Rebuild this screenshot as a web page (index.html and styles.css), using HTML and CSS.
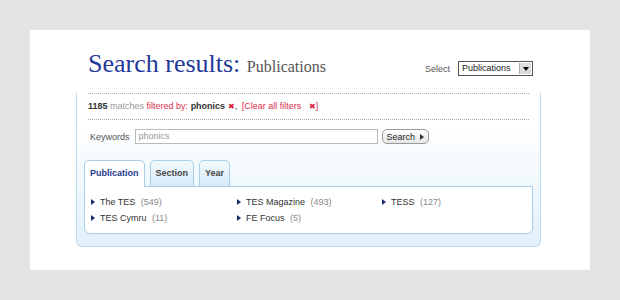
FILE: index.html
```html
<!DOCTYPE html>
<html lang="en">

<head>
    <meta charset="UTF-8">
    <title>Search results: Publications</title>
    <link rel="stylesheet" href="styles.css">
</head>

<body>
    <div class="page">
        <div class="header">
            <h1>Search results: <span class="sub">Publications</span></h1>
            <div class="picker">
                <label>Select</label>
                <div class="select">Publications<span class="arrow"></span></div>
            </div>
        </div>

        <div class="results">
            <div class="filters">
                <b>1185</b> <span class="muted">matches</span>
                <span class="red">filtered by:</span> <b>phonics</b> <span class="x">&#x2716;</span>,
                <span class="clear">[Clear all filters <span class="x">&#x2716;</span>]</span>
            </div>
            <div class="search">
                <label>Keywords</label>
                <div class="input">phonics</div>
                <button>Search <span class="tri"></span></button>
            </div>

            <div class="tabs">
                <div class="tab active">Publication</div>
                <div class="tab">Section</div>
                <div class="tab">Year</div>
            </div>
            <div class="panel">
                <div class="item"><span class="tri"></span>The TES <span class="count">(549)</span></div>
                <div class="item"><span class="tri"></span>TES Magazine <span class="count">(493)</span></div>
                <div class="item"><span class="tri"></span>TESS <span class="count">(127)</span></div>
                <div class="item"><span class="tri"></span>TES Cymru <span class="count">(11)</span></div>
                <div class="item"><span class="tri"></span>FE Focus <span class="count">(5)</span></div>
            </div>
        </div>
    </div>
</body>

</html>
```

FILE: styles.css
```css
body {
    margin: 0;
    background: #e3e3e3;
    font-family: "Liberation Sans", Arial, sans-serif;
    font-size: 9px;
    color: #333;
}

.page {
    width: 560px;
    height: 240px;
    margin: 30px;
    background: #fff;
    box-sizing: border-box;
    padding: 14px 0 0 46px;
}

.header {
    display: flex;
    align-items: flex-end;
    width: 445px;
    height: 45px;
    padding-left: 12px;
}

h1 {
    flex: 1;
    margin: 0 0 9px;
    font-family: "Liberation Serif", "Times New Roman", serif;
    font-weight: normal;
    font-size: 26px;
    line-height: 26px;
    color: #22399a;
}

h1 .sub {
    font-size: 16px;
    color: #555;
}

.picker {
    display: flex;
    align-items: center;
    gap: 8px;
    margin-bottom: 13px;
    color: #555;
}

.select {
    position: relative;
    width: 70px;
    height: 13px;
    line-height: 13px;
    padding-left: 3px;
    border: 1px solid #555;
    background: #fff;
    color: #222;
}

.select .arrow {
    position: absolute;
    right: 1px;
    top: 1px;
    width: 11px;
    height: 11px;
    background: #ddd;
    border-left: 1px solid #aaa;
}

.select .arrow::after {
    content: "";
    position: absolute;
    left: 3px;
    top: 4px;
    border: 3px solid transparent;
    border-top: 4px solid #000;
}

.results {
    width: 465px;
    height: 154px;
    margin-top: 4px;
    box-sizing: border-box;
    padding: 0 7px;
    border: 1px solid #bcdcf0;
    border-top: none;
    border-radius: 0 0 6px 6px;
    background: linear-gradient(#fff 0%, #fff 20%, #e1f0fa 100%);
}

.filters {
    margin: 0 4px;
    padding: 5px 0;
    height: 15px;
    line-height: 15px;
    border-top: 1px dotted #aaa;
    border-bottom: 1px dotted #aaa;
    color: #333;
}

.filters .muted {
    color: #999;
}

.red,
.clear {
    color: #d8314b;
}

.x {
    color: #d8203b;
    font-size: 8px;
}

.clear {
    margin-left: 2px;
}

.clear .x {
    margin-left: 5px;
}

.search {
    display: flex;
    align-items: center;
    gap: 5px;
    padding: 9px 6px 0;
    color: #555;
}

.input {
    width: 238px;
    height: 13px;
    line-height: 13px;
    padding-left: 3px;
    border: 1px solid #bbb;
    color: #999;
    background: #fff;
}

button {
    font: inherit;
    color: #222;
    height: 15px;
    padding: 0 4px;
    margin-left: -1px;
    border: 1px solid #999;
    border-radius: 5px;
    background: linear-gradient(#fff, #e6e6e6);
    display: flex;
    align-items: center;
    gap: 5px;
}

.tri {
    display: inline-block;
    border: 3px solid transparent;
    border-left: 4px solid #1d2a6e;
    border-right: none;
}

button .tri {
    border-left-color: #333;
}

.tabs {
    display: flex;
    gap: 5px;
    margin-top: 15px;
    height: 27px;
    align-items: flex-end;
}

.tab {
    height: 25px;
    line-height: 25px;
    padding: 0 5px;
    border: 1px solid #a9d0ea;
    border-bottom: none;
    border-radius: 5px 5px 0 0;
    background: linear-gradient(#f3f9fd, #d6eaf8);
    font-weight: bold;
    color: #444;
}

.tab.active {
    height: 26px;
    background: #fff;
    color: #243b8f;
    margin-bottom: -1px;
    position: relative;
}

.panel {
    display: grid;
    grid-template-columns: 146px 145px 1fr;
    align-content: start;
    row-gap: 6px;
    height: 36px;
    padding: 10px 6px 0;
    border: 1px solid #a9d0ea;
    border-radius: 0 0 6px 6px;
    background: #fff;
    color: #333;
}

.item .tri {
    margin-right: 5px;
}

.count {
    color: #888;
    margin-left: 3px;
}
```
